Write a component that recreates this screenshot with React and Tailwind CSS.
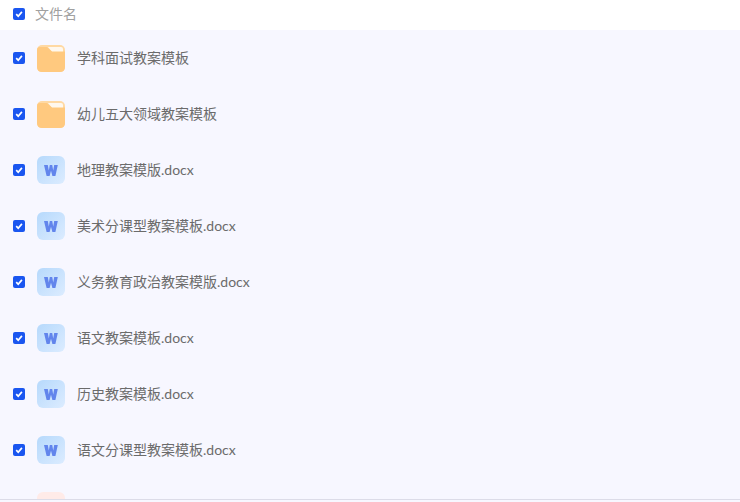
const files = [
  { name: "学科面试教案模板", type: "folder" },
  { name: "幼儿五大领域教案模板", type: "folder" },
  { name: "地理教案模版.docx", type: "word" },
  { name: "美术分课型教案模板.docx", type: "word" },
  { name: "义务教育政治教案模版.docx", type: "word" },
  { name: "语文教案模板.docx", type: "word" },
  { name: "历史教案模板.docx", type: "word" },
  { name: "语文分课型教案模板.docx", type: "word" },
  { name: "", type: "pdf" },
];

const Check = () => (
  <span className="w-3 h-3 shrink-0 rounded-[2px] bg-[#1a56f0] flex items-center justify-center">
    <svg width="12" height="12" viewBox="0 0 12 12" fill="none">
      <path d="M3.2 6.2 L5.2 8.2 L8.9 3.9" stroke="#fff" strokeWidth="1.7" />
    </svg>
  </span>
);

const FolderIcon = () => (
  <svg width="28" height="28" viewBox="0 0 28 28" className="shrink-0 block">
    <rect y="1" width="28" height="27" rx="5" fill="#ffd9a3" />
    <path d="M11 3 H24 Q26 3 26 5 V8 H15 Z" fill="#fff8ee" />
    <path d="M0 6 Q0 3 3 3 H10 L15 7.5 H28 V23 Q28 28 23 28 H5 Q0 28 0 23 Z" fill="#ffc97f" />
  </svg>
);

const WordIcon = () => (
  <svg width="28" height="28" viewBox="0 0 28 28" className="shrink-0 block">
    <defs>
      <linearGradient id="wordBg" x1="0" y1="0" x2="1" y2="1">
        <stop offset="0" stopColor="#b6d9fc" />
        <stop offset="1" stopColor="#dcecff" />
      </linearGradient>
    </defs>
    <rect width="28" height="28" rx="6" fill="url(#wordBg)" />
    <path d="M7 9 H10.8 L11.8 14.4 L12.8 9 H15.2 L16.2 14.4 L17.2 9 H20.8 L18.4 20 H15.4 L14 14.8 L12.6 20 H9.6 Z" fill="#6285ec" />
  </svg>
);

const PdfIcon = () => <div className="w-7 h-7 shrink-0 rounded-md bg-[#ffebe8]" />;

const Row = ({ file }) => (
  <div className="h-14 shrink-0 flex items-center pl-[13px]">
    <Check />
    <div className="ml-3">
      {file.type === "folder" && <FolderIcon />}
      {file.type === "word" && <WordIcon />}
      {file.type === "pdf" && <PdfIcon />}
    </div>
    <span className="ml-3 text-sm text-[#6b6b6b]">{file.name}</span>
  </div>
);

export default function App() {
  return (
    <div className="h-[502px] w-full flex flex-col overflow-hidden bg-white font-['Lato','Noto_Sans_CJK_SC',sans-serif]">
      {/* header */}
      <div className="h-[30px] shrink-0 flex items-center pl-[13px] pb-0.5">
        <Check />
        <span className="ml-2.5 text-sm text-[#a0a0a0]">文件名</span>
      </div>

      {/* list */}
      <div className="flex-1 min-h-0 overflow-hidden flex flex-col bg-[#f7f7ff] border-b border-[#dcdce8]">
        {files.map((f, i) => (
          <Row key={i} file={f} />
        ))}
      </div>
      <div className="h-0.5 shrink-0 bg-[#f7f7ff]" />
    </div>
  );
}
